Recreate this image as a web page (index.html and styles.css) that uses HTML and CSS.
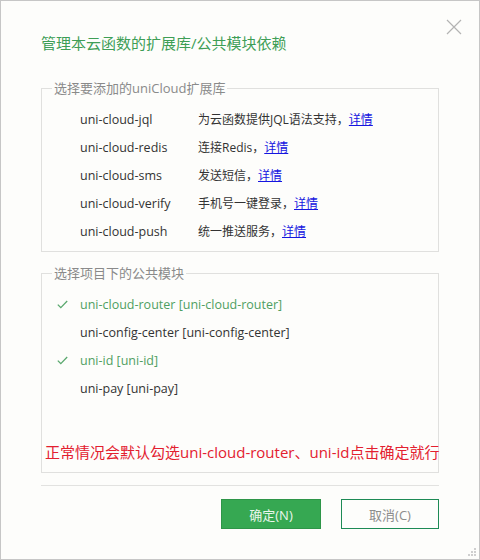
FILE: index.html
```html
<!DOCTYPE html>
<html lang="zh-CN">
<head>
<meta charset="utf-8">
<title>管理本云函数的扩展库/公共模块依赖</title>
<link rel="stylesheet" href="styles.css">
</head>
<body>
<div class="dialog">
  <button class="close" aria-label="关闭">
    <svg width="16" height="16" viewBox="0 0 16 16"><path d="M1 1L15 15M15 1L1 15" stroke="#b3b3b3" stroke-width="1.2" fill="none"/></svg>
  </button>
  <h1 class="title">管理本云函数的扩展库/公共模块依赖</h1>

  <fieldset class="group group-ext">
    <legend>选择要添加的uniCloud扩展库</legend>
    <div class="ext-row"><span class="ext-name">uni-cloud-jql</span><span class="ext-desc">为云函数提供JQL语法支持，<a href="#">详情</a></span></div>
    <div class="ext-row"><span class="ext-name">uni-cloud-redis</span><span class="ext-desc">连接Redis，<a href="#">详情</a></span></div>
    <div class="ext-row"><span class="ext-name">uni-cloud-sms</span><span class="ext-desc">发送短信，<a href="#">详情</a></span></div>
    <div class="ext-row"><span class="ext-name">uni-cloud-verify</span><span class="ext-desc">手机号一键登录，<a href="#">详情</a></span></div>
    <div class="ext-row"><span class="ext-name">uni-cloud-push</span><span class="ext-desc">统一推送服务，<a href="#">详情</a></span></div>
  </fieldset>

  <fieldset class="group group-mod">
    <legend>选择项目下的公共模块</legend>
    <div class="mod-row checked"><span class="check"><svg width="11" height="9" viewBox="0 0 11 9"><path d="M0.8 4.6L3.8 7.6L10.2 1" stroke="#5aa86e" stroke-width="1.3" fill="none"/></svg></span>uni-cloud-router [uni-cloud-router]</div>
    <div class="mod-row"><span class="check"></span>uni-config-center [uni-config-center]</div>
    <div class="mod-row checked"><span class="check"><svg width="11" height="9" viewBox="0 0 11 9"><path d="M0.8 4.6L3.8 7.6L10.2 1" stroke="#5aa86e" stroke-width="1.3" fill="none"/></svg></span>uni-id [uni-id]</div>
    <div class="mod-row"><span class="check"></span>uni-pay [uni-pay]</div>
    <p class="note">正常情况会默认勾选uni-cloud-router、uni-id点击确定就行</p>
  </fieldset>

  <div class="footer">
    <button class="btn btn-ok">确定(N)</button>
    <button class="btn btn-cancel">取消(C)</button>
  </div>

  <svg class="grip" width="9" height="9" viewBox="0 0 9 9">
    <rect x="6" y="0" width="2" height="2" fill="#cfcfcf"/>
    <rect x="3" y="3" width="2" height="2" fill="#cfcfcf"/>
    <rect x="6" y="3" width="2" height="2" fill="#cfcfcf"/>
    <rect x="0" y="6" width="2" height="2" fill="#cfcfcf"/>
    <rect x="3" y="6" width="2" height="2" fill="#cfcfcf"/>
    <rect x="6" y="6" width="2" height="2" fill="#cfcfcf"/>
  </svg>
</div>
</body>
</html>
```

FILE: styles.css
```css
html, body {
  margin: 0;
  padding: 0;
  background: #fdfdfb;
}

.dialog {
  position: relative;
  box-sizing: border-box;
  width: 480px;
  height: 560px;
  border: 1px solid #c6c6c6;
  background: #fdfdfb;
  padding: 0 40px;
  font-family: "Open Sans", "Noto Sans CJK SC", sans-serif;
  color: #333;
}

.close {
  position: absolute;
  top: 17px;
  right: 16px;
  width: 18px;
  height: 18px;
  padding: 0;
  border: 0;
  background: transparent;
  display: flex;
  align-items: center;
  justify-content: center;
}

.title {
  margin: 0;
  padding-top: 32px;
  font-size: 15px;
  line-height: 20px;
  font-weight: normal;
  color: #3e9e56;
}

.group {
  margin: 0;
  padding: 0;
  border: 1px solid #e0e0de;
  min-width: 0;
}

.group legend {
  margin-left: 10px;
  padding: 0 2px;
  font-size: 13px;
  line-height: 18px;
  color: #8a8a8a;
}

.group-ext {
  margin-top: 26px;
  padding: 8px 0 6px;
}

.ext-row {
  display: flex;
  height: 28px;
  align-items: center;
  padding-left: 38px;
  font-size: 12.5px;
}

.ext-name {
  width: 118px;
  flex: none;
}

.ext-desc {
  font-size: 12px;
}

.ext-desc a {
  color: #1515e0;
  text-decoration: underline;
}

.group-mod {
  margin-top: 12px;
  padding: 8px 0 9px;
}

.mod-row {
  display: flex;
  height: 28px;
  align-items: center;
  font-size: 12.5px;
  color: #333;
}

.mod-row.checked {
  color: #4f9f62;
}

.check {
  width: 38px;
  padding-left: 15px;
  box-sizing: border-box;
  flex: none;
  display: flex;
  align-items: center;
}

.note {
  margin: 39px 0 0;
  padding-left: 3px;
  font-size: 15px;
  line-height: 22px;
  color: #e3202f;
  white-space: nowrap;
}

.footer {
  margin-top: 12px;
  border-top: 1px solid #e2e2e0;
  padding-top: 13px;
  display: flex;
  justify-content: flex-end;
  gap: 20px;
}

.btn {
  height: 30px;
  box-sizing: border-box;
  font-family: "Open Sans", "Noto Sans CJK SC", sans-serif;
  font-size: 13px;
  padding: 0;
  cursor: pointer;
}

.btn-ok {
  width: 100px;
  background: #36a852;
  border: 1px solid #2e9548;
  color: #eaf6ec;
}

.btn-cancel {
  width: 98px;
  background: #fdfdfb;
  border: 1px solid #1d8a55;
  color: #8c8c8c;
}

.grip {
  position: absolute;
  right: 2px;
  bottom: 2px;
}
```
